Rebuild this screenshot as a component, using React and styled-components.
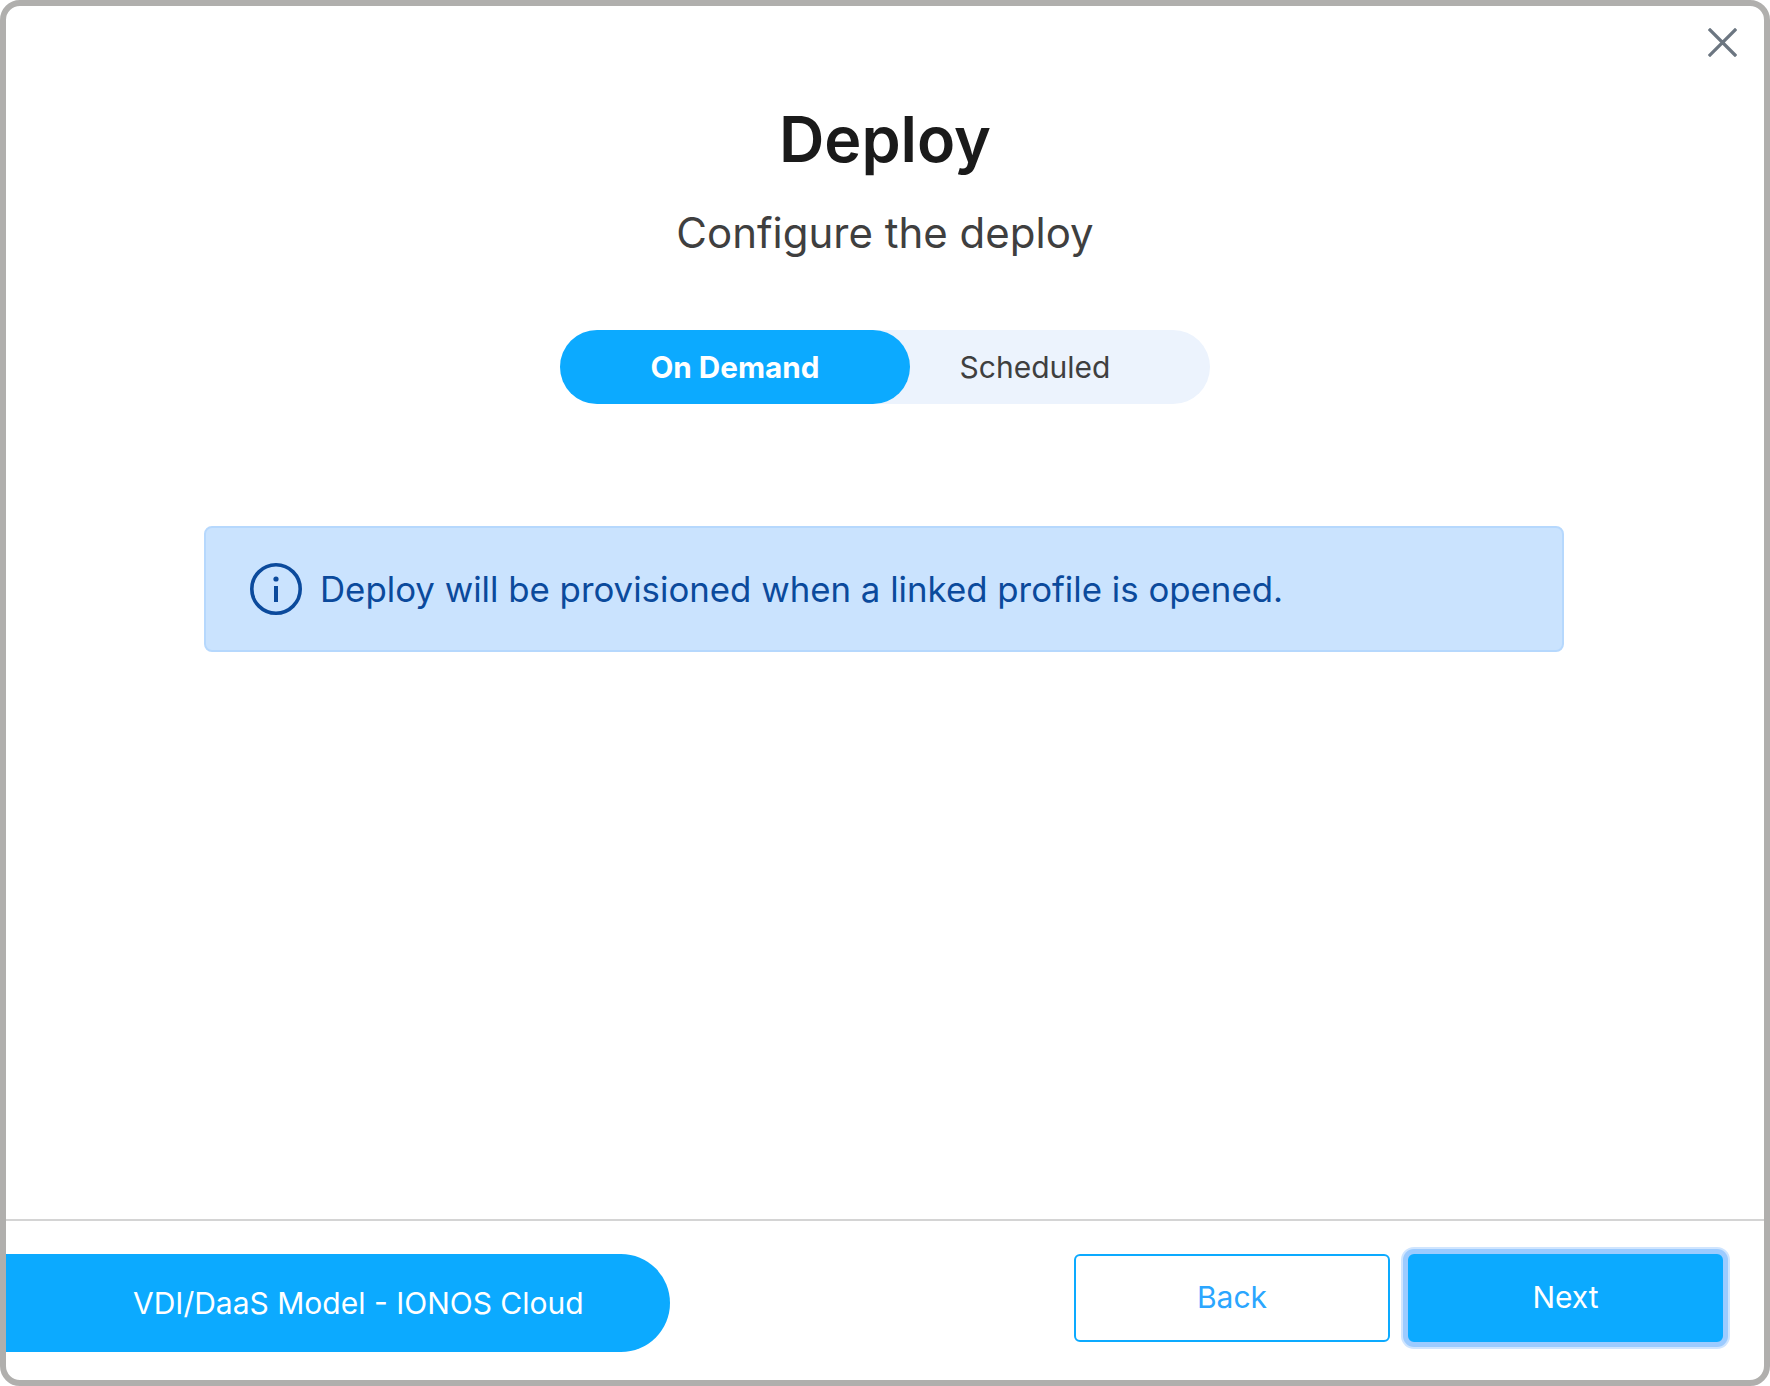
import React from 'react'
import styled, { createGlobalStyle } from 'styled-components'

const Global = createGlobalStyle`
  html, body {
    margin: 0;
    padding: 0;
    background: #fff;
    font-family: 'Inter', 'Liberation Sans', sans-serif;
  }
  * { box-sizing: border-box; }
`

const Frame = styled.div`
  position: relative;
  width: 1770px;
  height: 1386px;
  border: 6px solid #b0afad;
  border-radius: 20px;
  background: #fff;
  display: flex;
  flex-direction: column;
  overflow: hidden;
`

const CloseButton = styled.button`
  position: absolute;
  top: 22px;
  right: 27px;
  width: 29px;
  height: 29px;
  padding: 0;
  border: 0;
  background: none;
  display: flex;
`

const Main = styled.main`
  flex: 1;
  display: flex;
  flex-direction: column;
  align-items: center;
  padding-top: 99px;
`

const Title = styled.h1`
  margin: 0;
  font-size: 62.8px;
  line-height: 68px;
  font-weight: 600;
  color: #1a1a1a;
`

const Subtitle = styled.p`
  margin: 38px 0 0;
  font-size: 42px;
  line-height: 44px;
  font-weight: 400;
  color: #3f3f3f;
`

const Toggle = styled.div`
  display: flex;
  width: 650px;
  height: 74px;
  margin-top: 75px;
  border-radius: 37px;
  background: #ecf3fd;
`

const ToggleOption = styled.div`
  position: relative;
  flex: none;
  width: 350px;
  margin-left: ${p => (p.$active ? '0' : '-50px')};
  z-index: ${p => (p.$active ? 1 : 0)};
  border-radius: 37px;
  display: flex;
  align-items: center;
  justify-content: center;
  font-size: ${p => (p.$active ? '29.7px' : '30px')};
  font-weight: ${p => (p.$active ? 700 : 400)};
  color: ${p => (p.$active ? '#fff' : '#3f3f3f')};
  background: ${p => (p.$active ? '#0caaff' : 'transparent')};
`

const Alert = styled.div`
  width: 1360px;
  height: 126px;
  margin: 122px 2px 0 0;
  padding-left: 44px;
  display: flex;
  align-items: center;
  gap: 18px;
  border: 2px solid #b6d8fd;
  border-radius: 8px;
  background: #cae3fe;
  font-size: 34.8px;
  color: #0b4a9c;
`

const Footer = styled.footer`
  height: 161px;
  border-top: 2px solid #d4d4d4;
  display: flex;
  justify-content: space-between;
  padding: 33px 41px 0 0;
`

const ModelPill = styled.div`
  width: 664px;
  height: 98px;
  padding-left: 127px;
  display: flex;
  align-items: center;
  border-radius: 0 49px 49px 0;
  background: #0caaff;
  color: #fff;
  font-size: 30px;
`

const Actions = styled.div`
  display: flex;
  gap: 18px;
`

const ActionButton = styled.button`
  width: ${p => (p.$primary ? '315px' : '316px')};
  height: 88px;
  padding: 0 0 3px;
  border-radius: 6px;
  font-family: inherit;
  font-size: 30px;
  font-weight: 400;
  border: 2px solid #0caaff;
  color: ${p => (p.$primary ? '#fff' : '#2ba6ff')};
  background: ${p => (p.$primary ? '#0caaff' : '#fff')};
  box-shadow: ${p => (p.$primary ? '0 0 0 5px #9ccbff, 0 0 0 7px #cfe5ff' : 'none')};
`

const CloseIcon = () => (
  <svg width="29" height="29" viewBox="0 0 29 29" fill="none" stroke="#6c7681" strokeWidth="3.2" strokeLinecap="square">
    <path d="M2 2l25 25M27 2L2 27" />
  </svg>
)

const InfoIcon = () => (
  <svg width="52" height="52" viewBox="0 0 52 52" fill="none" stroke="#0b4a9c">
    <circle cx="26" cy="26" r="24.2" strokeWidth="3.6" />
    <path d="M26 23v16" strokeWidth="4" />
    <circle cx="26" cy="16" r="2.6" fill="#0b4a9c" stroke="none" />
  </svg>
)

const App = () => {
  return (
    <Frame>
      <Global />
      <CloseButton>
        <CloseIcon />
      </CloseButton>
      <Main>
        <Title>Deploy</Title>
        <Subtitle>Configure the deploy</Subtitle>
        <Toggle>
          <ToggleOption $active>On Demand</ToggleOption>
          <ToggleOption>Scheduled</ToggleOption>
        </Toggle>
        <Alert>
          <InfoIcon />
          Deploy will be provisioned when a linked profile is opened.
        </Alert>
      </Main>
      <Footer>
        <ModelPill>VDI/DaaS Model - IONOS Cloud</ModelPill>
        <Actions>
          <ActionButton>Back</ActionButton>
          <ActionButton $primary>Next</ActionButton>
        </Actions>
      </Footer>
    </Frame>
  )
}

export default App
